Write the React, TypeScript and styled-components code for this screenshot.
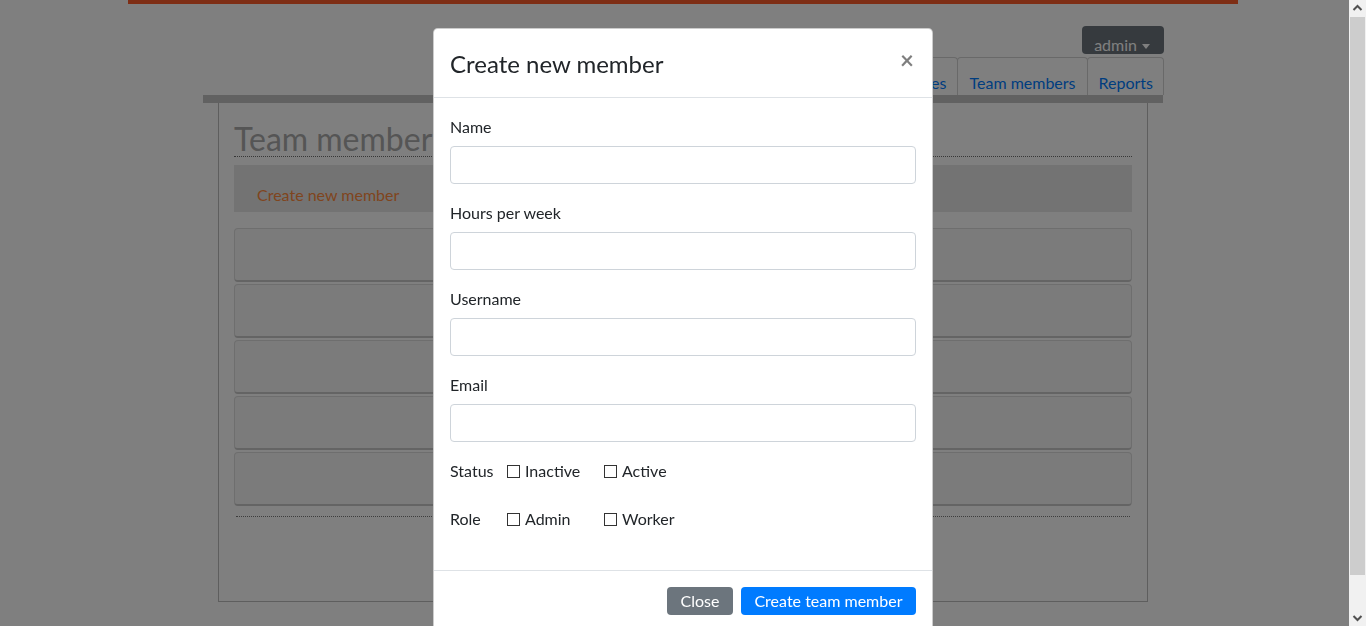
import React from "react";
import styled, { createGlobalStyle } from "styled-components";

const GlobalStyle = createGlobalStyle`
  html, body {
    margin: 0;
    padding: 0;
    height: 100%;
    overflow: hidden;
    background: #ffffff;
  }
  body {
    font-family: "Segoe UI", Lato, "Liberation Sans", sans-serif;
    font-size: 16px;
    line-height: 1.5;
    color: #212529;
  }
  *, *::before, *::after { box-sizing: border-box; }
`;

const FONT = `"Segoe UI", Lato, "Liberation Sans", sans-serif`;

/* ---------- page under the modal ---------- */

const TopStrip = styled.div`
  max-width: 1140px;
  margin: 0 auto;
  padding: 0 15px;
`;

const Accent = styled.div`
  height: 4px;
  background: #fd5c2a;
`;

const Header = styled.header`
  width: 960px;
  margin: 0 auto;
`;

const UserBar = styled.div`
  display: flex;
  justify-content: flex-end;
  padding-top: 22px;
  margin-right: -1px;
`;

const AdminButton = styled.button`
  height: 28px;
  padding: 9px 14px 0 12px;
  border: none;
  border-radius: 4px;
  background: #6c757d;
  color: #ffffff;
  font-family: ${FONT};
  font-size: 16px;
  line-height: 20px;
  display: flex;
  align-items: flex-start;

  &::after {
    content: "";
    display: inline-block;
    margin-left: 5px;
    margin-top: 9px;
    border-top: 5px solid currentColor;
    border-left: 4px solid transparent;
    border-right: 4px solid transparent;
  }
`;

const TabStrip = styled.nav`
  display: flex;
  justify-content: flex-end;
  margin-top: 3px;
  margin-right: -1px;
`;

const Tab = styled.a`
  height: 38px;
  padding: 13px 11px 0;
  margin-left: -1px;
  border: 1px solid #d2d2d2;
  border-bottom: none;
  border-radius: 4px 4px 0 0;
  color: #007bff;
  font-size: 16px;
  line-height: 24px;
  text-decoration: none;
  white-space: nowrap;

  &:last-child {
    padding-right: 10px;
  }
`;

const TabRule = styled.div`
  height: 8px;
  background: #c2c2c2;
`;

const Panel = styled.main`
  margin: 0 15px;
  height: 499px;
  padding: 15px;
  border: 1px solid #bcbcbc;
  border-top: none;
`;

const PageTitle = styled.h2`
  margin: 0 0 8px;
  padding-top: 3px;
  font-size: 32px;
  line-height: 35px;
  font-weight: 400;
  color: #aaaaaa;
  border-bottom: 1px dotted #6e6e6e;
`;

const ActionBox = styled.div`
  height: 47px;
  margin-bottom: 16px;
  padding: 18px 23px 5px;
  background: #e6e6e6;
  line-height: 24px;
`;

const OrangeLink = styled.a`
  color: #ff8a3d;
  text-decoration: none;
`;

const MemberList = styled.div`
  display: flex;
  flex-direction: column;
  gap: 2px;
`;

const MemberRow = styled.div`
  height: 54px;
  background: #f6f6f6;
  border: 1px solid #dcdcdc;
  border-bottom: 2px solid #c8c8c8;
  border-radius: 4px;
`;

const DottedRule = styled.hr`
  margin: 10px 2px 0;
  border: none;
  border-top: 1px dotted #7a7a7a;
`;

/* ---------- modal ---------- */

const Backdrop = styled.div`
  position: fixed;
  inset: 0;
  background: rgba(0, 0, 0, 0.5);
`;

const ModalWrap = styled.div`
  position: fixed;
  inset: 0;
  padding: 0 17px;
  overflow: hidden;
`;

const Dialog = styled.div`
  width: 500px;
  margin: 28px auto;
  background: #ffffff;
  border: 1px solid rgba(0, 0, 0, 0.2);
  border-radius: 4.8px;
`;

const ModalHeader = styled.div`
  display: flex;
  align-items: flex-start;
  padding: 16px;
  border-bottom: 1px solid #dee2e6;
`;

const ModalTitle = styled.h5`
  margin: 0;
  padding-top: 1px;
  height: 36px;
  font-size: 24px;
  line-height: 36px;
  font-weight: 400;
  color: #212529;
`;

const CloseX = styled.button`
  margin: 3px 2px 0 auto;
  padding: 0;
  border: none;
  background: transparent;
  font-family: ${FONT};
  font-size: 24px;
  font-weight: 700;
  line-height: 24px;
  color: #000000;
  opacity: 0.5;
  text-shadow: 0 1px 0 #ffffff;
`;

const ModalBody = styled.div`
  padding: 16px;
`;

const FormGroup = styled.div`
  margin-bottom: 16px;
`;

const FieldLabel = styled.label`
  display: block;
  height: 24px;
  margin-bottom: 8px;
  padding-top: 1px;
  line-height: 24px;
`;

const TextInput = styled.input`
  display: block;
  width: 100%;
  height: 38px;
  padding: 6px 12px;
  border: 1px solid #ced4da;
  border-radius: 4px;
  font-family: ${FONT};
  font-size: 16px;
  color: #495057;
  background: #ffffff;
`;

const CheckRow = styled.div`
  display: flex;
  align-items: flex-start;
  height: 32px;
  padding-top: 1px;
  margin-bottom: 16px;
  line-height: 24px;
`;

const RowLabel = styled.span`
  width: 57px;
`;

const CheckOption = styled.label`
  width: 97px;
  display: flex;
  align-items: center;
  gap: 5px;
  height: 24px;
`;

const Box = styled.input`
  appearance: none;
  -webkit-appearance: none;
  margin: 0;
  width: 13px;
  height: 13px;
  border: 1px solid #333333;
  background: #ffffff;
  border-radius: 0;
`;

const ModalFooter = styled.div`
  display: flex;
  justify-content: flex-end;
  padding: 12px;
  border-top: 1px solid #dee2e6;
`;

const FooterButton = styled.button<{ $primary?: boolean }>`
  margin: 4px;
  height: 28px;
  padding: 0 13.5px;
  border: none;
  border-radius: 4px;
  background: ${(p) => (p.$primary ? "#007bff" : "#6c757d")};
  color: #ffffff;
  font-family: ${FONT};
  font-size: 16px;
  line-height: 28px;
`;

/* ---------- fake scrollbar of the modal ---------- */

const ScrollBar = styled.div`
  position: fixed;
  top: 0;
  right: 0;
  bottom: 0;
  width: 17px;
  background: #f1f1f1;
  display: flex;
  flex-direction: column;
`;

const ScrollArrow = styled.div`
  height: 17px;
  display: flex;
  align-items: center;
  justify-content: center;
`;

const ScrollTrack = styled.div`
  flex: 1;
  padding: 0 1px;
`;

const ScrollThumb = styled.div`
  height: 558px;
  background: #cdcdcd;
`;

const Chevron = ({ up }: { up?: boolean }) => (
  <svg width="17" height="17" viewBox="0 0 17 17">
    <polyline
      points={up ? "4.5,10 8.5,6 12.5,10" : "4.5,7 8.5,11 12.5,7"}
      fill="none"
      stroke="#505050"
      strokeWidth="2"
    />
  </svg>
);

const tabs = ["Timesheet", "Clients", "Projects", "Categories", "Team members", "Reports"];

export default function App() {
  return (
    <>
      <GlobalStyle />
      <TopStrip>
        <Accent />
      </TopStrip>
      <Header>
        <UserBar>
          <AdminButton>admin</AdminButton>
        </UserBar>
        <TabStrip>
          {tabs.map((t) => (
            <Tab key={t} href="#">
              {t}
            </Tab>
          ))}
        </TabStrip>
        <TabRule />
        <Panel>
          <PageTitle>Team members</PageTitle>
          <ActionBox>
            <OrangeLink href="#">Create new member</OrangeLink>
          </ActionBox>
          <MemberList>
            {[0, 1, 2, 3, 4].map((i) => (
              <MemberRow key={i} />
            ))}
          </MemberList>
          <DottedRule />
        </Panel>
      </Header>

      <Backdrop />
      <ModalWrap>
        <Dialog>
          <ModalHeader>
            <ModalTitle>Create new member</ModalTitle>
            <CloseX aria-label="Close">×</CloseX>
          </ModalHeader>
          <ModalBody>
            <FormGroup>
              <FieldLabel>Name</FieldLabel>
              <TextInput type="text" />
            </FormGroup>
            <FormGroup>
              <FieldLabel>Hours per week</FieldLabel>
              <TextInput type="text" />
            </FormGroup>
            <FormGroup>
              <FieldLabel>Username</FieldLabel>
              <TextInput type="text" />
            </FormGroup>
            <FormGroup>
              <FieldLabel>Email</FieldLabel>
              <TextInput type="text" />
            </FormGroup>
            <CheckRow>
              <RowLabel>Status</RowLabel>
              <CheckOption>
                <Box type="checkbox" />
                Inactive
              </CheckOption>
              <CheckOption>
                <Box type="checkbox" />
                Active
              </CheckOption>
            </CheckRow>
            <CheckRow>
              <RowLabel>Role</RowLabel>
              <CheckOption>
                <Box type="checkbox" />
                Admin
              </CheckOption>
              <CheckOption>
                <Box type="checkbox" />
                Worker
              </CheckOption>
            </CheckRow>
          </ModalBody>
          <ModalFooter>
            <FooterButton>Close</FooterButton>
            <FooterButton $primary>Create team member</FooterButton>
          </ModalFooter>
        </Dialog>
      </ModalWrap>
      <ScrollBar>
        <ScrollArrow>
          <Chevron up />
        </ScrollArrow>
        <ScrollTrack>
          <ScrollThumb />
        </ScrollTrack>
        <ScrollArrow>
          <Chevron />
        </ScrollArrow>
      </ScrollBar>
    </>
  );
}
